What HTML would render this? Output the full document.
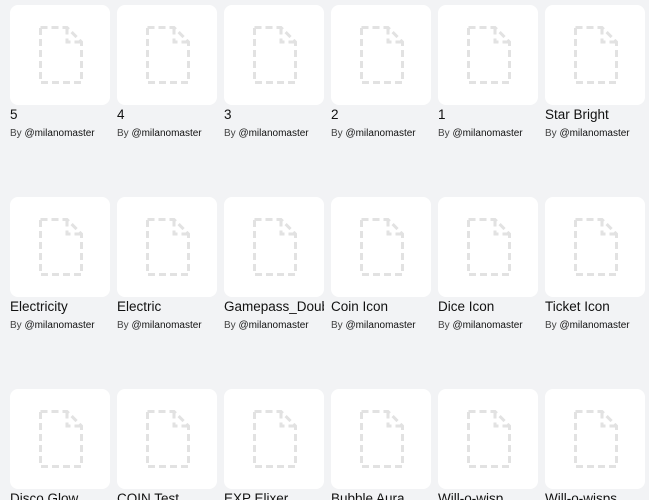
<!DOCTYPE html>
<html><head><style>
html,body{margin:0;width:649px;height:500px;overflow:hidden}
body{background:#f2f3f5;font-family:"Liberation Sans",sans-serif;position:relative}
.c{position:absolute;width:100px}
.t{width:100px;height:100px;background:#fff;border-radius:8px;position:relative}
.t svg{position:absolute;left:29px;top:21px}
.n{font-size:13.5px;color:#111;margin-top:1px;white-space:nowrap;overflow:hidden;line-height:17px}
.b{font-size:10px;color:#444;line-height:13px;margin-top:4px;white-space:nowrap}
.b span{color:#111}
</style></head><body>
<script>
const rows=[["5","4","3","2","1","Star Bright"],["Electricity","Electric","Gamepass_Double","Coin Icon","Dice Icon","Ticket Icon"],["Disco Glow","COIN Test","EXP Elixer","Bubble Aura","Will-o-wisp","Will-o-wisps"]];
const ic='<svg width="44" height="58" viewBox="0 0 44 58"><path d="M1.5 1.5H28L42.5 16V56.5H1.5Z M28 1.5V16H42.5" fill="none" stroke="#e2e2e2" stroke-width="3" stroke-dasharray="7 4"/></svg>';
let h='';
rows.forEach((r,i)=>r.forEach((n,j)=>{h+=`<div class="c" style="left:${10+j*107}px;top:${5+i*192}px"><div class="t">${ic}</div><div class="n">${n}</div><div class="b">By <span>@milanomaster</span></div></div>`}));
document.write(h);
</script>
</body></html>
